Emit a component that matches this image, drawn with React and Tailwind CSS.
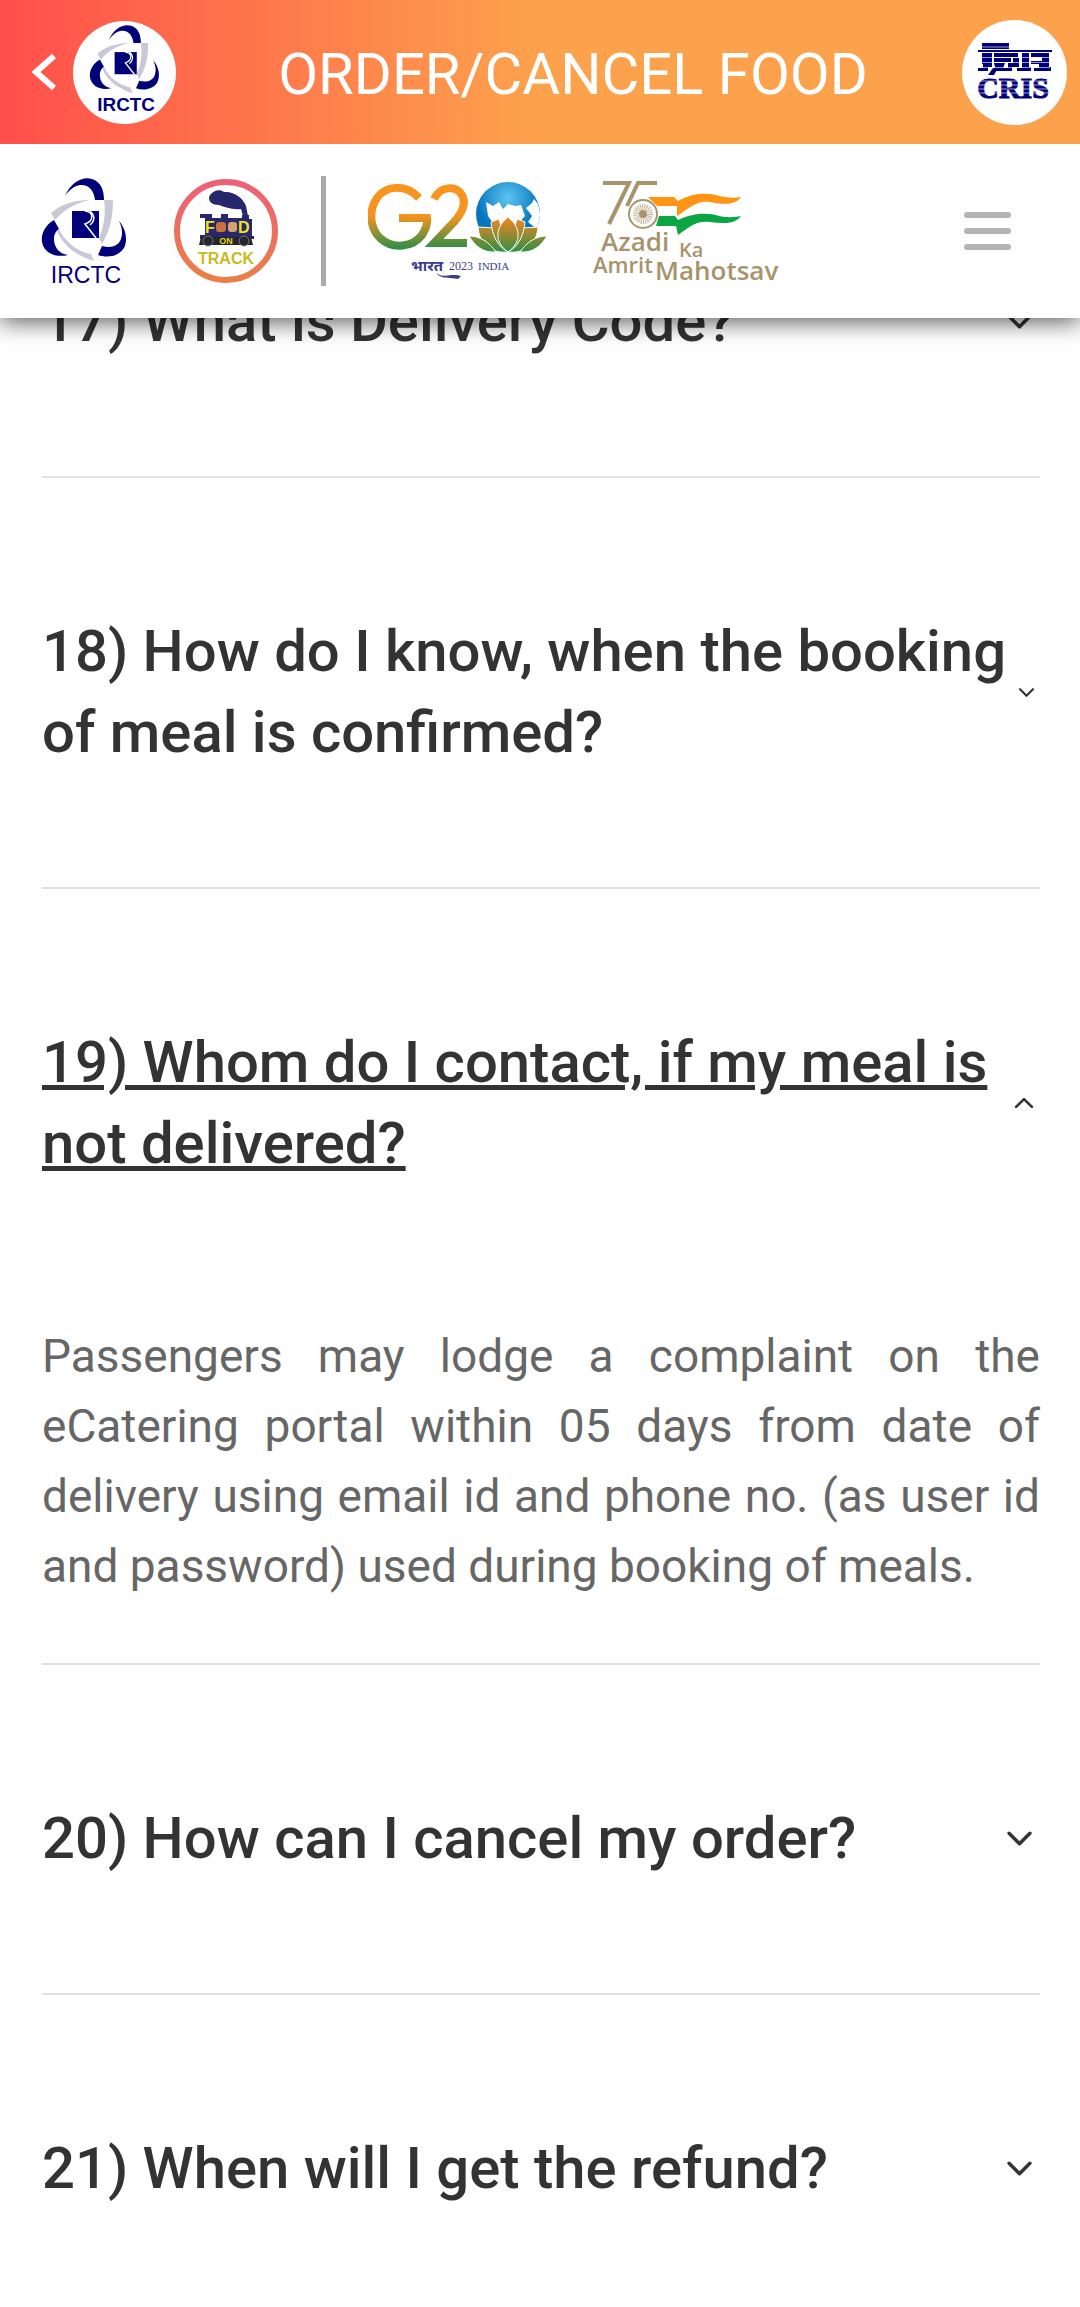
import { useState } from "react";
import { IoChevronDown, IoChevronUp } from "react-icons/io5";

const faqs = [
  { id: 17, question: "What is Delivery Code?", icon: "size-[37px]" },
  {
    id: 18,
    question: "How do I know, when the booking of meal is confirmed?",
    icon: "size-[23px]",
  },
  {
    id: 19,
    question: "Whom do I contact, if my meal is not delivered?",
    icon: "size-[28px]",
    answer:
      "Passengers may lodge a complaint on the eCatering portal within 05 days from date of delivery using email id and phone no. (as user id and password) used during booking of meals.",
  },
  { id: 20, question: "How can I cancel my order?", icon: "size-[37px]" },
  { id: 21, question: "When will I get the refund?", icon: "size-[37px]" },
];

const IrctcLogo = ({ className, weight }) => (
  <svg viewBox="0 0 84 106" className={className} role="img" aria-label="IRCTC">
    <g fill="#00007a">
      <path d="M23 18C29 4 41-2 50 1C59 4 62 12 62 22H53C52 12 46 6 38 7C32 8 27 12 23 18Z" />
      <path d="M12 42C2 48-1 57 0 64C2 75 13 80 26 77C17 76 12 69 12 61C12 56 14 53 17 51Z" />
      <path d="M77 43C84 51 86 62 82 70C76 79 65 80 56 77L60 68C68 70 76 69 79 61C81 55 80 49 77 43Z" />
    </g>
    <g fill="#cbc8d6">
      <path d="M48 22C31 22 18 27 9 35L13 42C22 32 33 25 48 22Z" />
      <path d="M62 22H71C71 39 68 53 60 66L57 60C62 48 64 36 62 22Z" />
      <path d="M17 51C23 64 36 74 49 76L52 83C35 78 21 68 15 53Z" />
    </g>
    <rect x="30" y="33" width="27" height="27" fill="#00007a" />
    <path
      d="M43 33C52 34 52 43 43 46L54 60M48 33C54 38 52 44 48 47"
      fill="none"
      stroke="#fff"
      strokeWidth="1.5"
    />
    <text
      x="44"
      y="105"
      textAnchor="middle"
      fill="#00007a"
      fontSize="23"
      fontWeight={weight}
      fontFamily="Liberation Sans, Arial, sans-serif"
    >
      IRCTC
    </text>
  </svg>
);

const CrisLogo = () => (
  <svg viewBox="0 0 76 58" className="w-[76px] overflow-visible" role="img" aria-label="CRIS">
    <g fill="#00007a">
      <path d="M6 0H33V6H6ZM2 7H76V9H2Z" />
      <path d="M6 10H16V24H12V28H2V25H7V21H6ZM18 10H42V14H18ZM18 15H35V19H18ZM18 20H29L26 28H20ZM37 15H43V24H36V28H25V25H32V20H37ZM46 10H53V24H55V28H41V25H46ZM55 10H73V24H75V28H58V25H63V21H55V18H66V14H55Z" />
      <path d="M17 25H22L18 32H12Z" />
    </g>
    <text
      x="37"
      y="55"
      textAnchor="middle"
      fill="#00007a"
      stroke="#00007a"
      strokeWidth="1"
      fontSize="30"
      fontWeight="700"
      fontFamily="Liberation Serif, Times New Roman, serif"
    >
      CRIS
    </text>
    <path
      d="M0 4H34M3 14.500H74M3 19.500H74M3 24.500H74M0 38H76M0 42H76M0 46H76M0 50H76"
      stroke="#fff"
      strokeWidth="1"
      opacity="0.6"
    />
  </svg>
);

const FoodTrackLogo = () => (
  <svg viewBox="0 0 104 104" className="w-[104px]" role="img" aria-label="Food on Track">
    <defs>
      <linearGradient id="ring" x1="0" y1="0" x2="0" y2="1">
        <stop offset="0" stopColor="#ef6078" />
        <stop offset="1" stopColor="#ea7f45" />
      </linearGradient>
    </defs>
    <circle cx="52" cy="52" r="49" fill="#fff" stroke="url(#ring)" strokeWidth="6" />
    <g fill="#27276b">
      <path d="M36 16C40 11 46 10 50 13C60 12 69 19 72 27L74 37H69L67 30C58 31 51 28 45 26C37 26 33 21 36 16Z" />
      <path d="M26 35H38V39H47V35H54V39H68V36H75V40H78V57H80V60H26V56H31V39H26Z" />
    </g>
    <path d="M27 58H77L79 66H25Z" fill="#25252c" />
    <g fill="#25252c" stroke="#77777c" strokeWidth="1">
      <circle cx="34" cy="62" r="5" />
      <circle cx="70" cy="62" r="5" />
    </g>
    <rect x="42" y="43" width="10" height="10" rx="3" fill="#c9703f" />
    <rect x="54" y="43" width="9" height="10" rx="3" fill="#d9a06c" />
    <g fontFamily="Liberation Sans, Arial, sans-serif" fontWeight="700">
      <g fill="#f4e21d" fontSize="16">
        <text x="31" y="54">F</text>
        <text x="64" y="54">D</text>
      </g>
      <text x="52" y="65" textAnchor="middle" fill="#e8d51c" fontSize="9">
        ON
      </text>
      <text x="52" y="85" textAnchor="middle" fill="#c9ba22" fontSize="16">
        TRACK
      </text>
    </g>
  </svg>
);

const G20Logo = () => (
  <svg viewBox="0 0 180 98" className="w-[180px]" role="img" aria-label="G20 Bharat 2023 India">
    <defs>
      <linearGradient id="tricolour" gradientUnits="userSpaceOnUse" x1="0" y1="2" x2="0" y2="66">
        <stop offset="0.5" stopColor="#f7931e" />
        <stop offset="1" stopColor="#2f8f46" />
      </linearGradient>
      <linearGradient id="petal" gradientUnits="userSpaceOnUse" x1="0" y1="36" x2="0" y2="70">
        <stop offset="0" stopColor="#f5851f" />
        <stop offset="1" stopColor="#2f8f46" />
      </linearGradient>
      <radialGradient id="globe" cx="0.5" cy="0.25" r="0.5">
        <stop offset="0" stopColor="#5cc6f0" />
        <stop offset="1" stopColor="#0575bd" />
      </radialGradient>
      <clipPath id="globeClip">
        <circle cx="140" cy="32" r="32" />
      </clipPath>
    </defs>
    <g fill="none" stroke="url(#tricolour)" strokeWidth="8">
      <path d="M51 16C38 2 18 3 9 16C0 29 2 46 12 56C25 68 45 65 54 53C58 47 60 42 59 36H31" />
      <path d="M66 17C72 4 88 3 94 13C99 22 94 31 86 40L66 61H99" />
    </g>
    <circle cx="140" cy="32" r="32" fill="url(#globe)" />
    <g fill="#fff" clipPath="url(#globeClip)">
      <path d="M118 20L125 24L131 20L135 27L140 22L147 24L153 23L157 34L150 42L127 44L120 34Z" />
      <path d="M158 26L164 21L166 17L170 22L174 38L170 48L160 40L164 34Z" />
    </g>
    <g fill="url(#petal)" stroke="#fff" strokeWidth="1">
      <path d="M110 45L127 46L140 70C124 72 111 62 110 45Z" />
      <path d="M170 45L153 46L140 70C156 72 169 62 170 45Z" />
      <path d="M123 40L131 37L140 70C130 65 124 53 123 40Z" />
      <path d="M157 40L149 37L140 70C150 65 156 53 157 40Z" />
      <path d="M140 35C126 46 127 61 140 70C153 61 154 46 140 35Z" />
      <path d="M101 54C112 54 121 60 128 70C115 71 107 64 101 54Z" />
      <path d="M179 54C168 54 159 60 152 70C165 71 173 64 179 54Z" />
    </g>
    <g fill="#3b3b8e">
      <text x="43" y="89" fontSize="15" fontWeight="700" fontFamily="Noto Sans, sans-serif">
        भारत
      </text>
      <text x="81" y="88" fontSize="12" fontFamily="Liberation Serif, serif">
        2023
      </text>
      <text x="110" y="88" fontSize="11" fontFamily="Liberation Serif, serif">
        INDIA
      </text>
    </g>
    <path d="M68 91C76 97 84 91 93 94L90 97C82 95 74 98 68 91Z" fill="#3b3b8e" />
  </svg>
);

const AzadiLogo = () => (
  <svg
    viewBox="0 0 184 100"
    className="w-[184px] overflow-visible"
    role="img"
    aria-label="Azadi Ka Amrit Mahotsav"
  >
    <g fill="none" stroke="#a8946c" strokeWidth="4">
      <path d="M10 2H36L16 43M64 2H45L34 25" />
      <circle cx="50" cy="33" r="14" strokeWidth="2" />
      <circle cx="50" cy="33" r="7" strokeWidth="6" strokeDasharray="1 1" opacity="0.7" />
    </g>
    <circle cx="50" cy="33" r="4" fill="#a8946c" />
    <path
      d="M55 16H81L85 20C102 11 116 12 126 15C135 17 143 17 148 16C143 24 130 24 117 21C104 19 96 27 84 35V25H64Z"
      fill="#ff9313"
    />
    <path
      d="M66 35H82L85 39C102 31 116 32 126 35C135 37 143 36 148 35C143 43 130 43 117 41C104 39 96 46 85 54L83 45H63Z"
      fill="#0ba544"
    />
    <g fill="#a8946c" fontFamily="Open Sans, Noto Sans, sans-serif" fontWeight="600">
      <text x="8" y="70" fontSize="26">Azadi</text>
      <text x="86" y="76" fontSize="20">Ka</text>
      <text x="0" y="92" fontSize="22">Amrit</text>
      <text x="62" y="99" fontSize="26">Mahotsav</text>
    </g>
  </svg>
);

const FaqItem = ({ faq, open, onToggle }) => {
  const Icon = open ? IoChevronUp : IoChevronDown;

  return (
    <li className="border-b-2 border-[#e2e2e2]">
      <button
        type="button"
        aria-expanded={open}
        onClick={onToggle}
        className="flex w-full cursor-pointer items-center justify-between pt-[133px] pr-0.5 pb-[114px] text-left text-[58px] leading-[81px] font-medium text-[#333]"
      >
        <span className={open ? "underline" : ""}>{`${faq.id}) ${faq.question}`}</span>
        <Icon className={`shrink-0 ${faq.icon}`} />
      </button>
      {open && (
        <p className="pt-[23px] pb-[62px] text-justify text-[46px] leading-[70px] text-[#666]">
          {faq.answer}
        </p>
      )}
    </li>
  );
};

const App = () => {
  const [openId, setOpenId] = useState(19);

  return (
    <div className="h-screen overflow-hidden bg-white font-[Roboto,sans-serif]">
      <div className="relative z-10 bg-white shadow-[0_4px_22px_rgba(0,0,0,0.65)]">
        <header className="flex h-36 items-center justify-between bg-linear-to-r/srgb from-[#ff4f4b] to-[#fda24c] to-50% pr-[13px] pl-8">
          <div className="flex items-center gap-4">
            <button type="button" aria-label="Back" className="cursor-pointer">
              <svg viewBox="0 0 25 36" className="w-[25px]">
                <path d="M22 2L4 18L22 34" fill="none" stroke="#fff" strokeWidth="6" />
              </svg>
            </button>
            <span className="flex size-[103px] justify-center rounded-full bg-white pt-1">
              <IrctcLogo className="h-[87px] overflow-visible" weight="700" />
            </span>
          </div>
          <h1 className="pt-1 pl-2 text-[58px] leading-none text-white">ORDER/CANCEL FOOD</h1>
          <span className="flex size-[105px] items-center justify-center rounded-full bg-white">
            <CrisLogo />
          </span>
        </header>

        <nav className="flex h-[174px] items-center justify-between pr-[69px] pl-[42px]">
          <div className="flex items-center">
            <IrctcLogo className="h-[106px] overflow-visible" weight="400" />
            <span className="ml-12">
              <FoodTrackLogo />
            </span>
            <span className="ml-[43px] h-[110px] w-[5px] bg-[#aaa]" />
            <span className="ml-[42px]">
              <G20Logo />
            </span>
            <span className="ml-[45px]">
              <AzadiLogo />
            </span>
          </div>
          <button
            type="button"
            aria-label="Menu"
            className="flex w-[47px] cursor-pointer flex-col gap-2.5"
          >
            <span className="h-1.5 w-full rounded-full bg-[#b3b3b3]" />
            <span className="h-1.5 w-full rounded-full bg-[#b3b3b3]" />
            <span className="h-1.5 w-full rounded-full bg-[#b3b3b3]" />
          </button>
        </nav>
      </div>

      {/* the list is scrolled part way under the fixed bars */}
      <ul className="-mt-[170px] pr-10 pl-[42px]">
        {faqs.map((faq) => (
          <FaqItem
            key={faq.id}
            faq={faq}
            open={openId === faq.id}
            onToggle={() => setOpenId(openId === faq.id ? null : faq.id)}
          />
        ))}
      </ul>
    </div>
  );
};

export default App;
